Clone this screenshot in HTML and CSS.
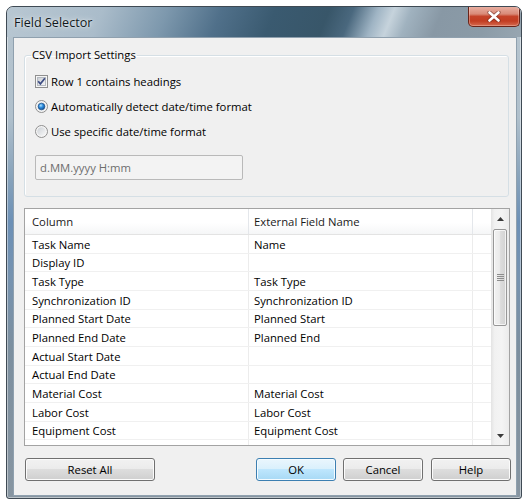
FILE: index.html
```html
<!DOCTYPE html>
<html lang="en">
<head>
<meta charset="utf-8">
<title>Field Selector</title>
<link rel="stylesheet" href="styles.css">
</head>
<body>
<div class="window">
  <div class="titlebar">
    <span class="title">Field Selector</span>
    <button class="close" aria-label="Close">
      <svg width="14" height="11" viewBox="0 0 14 11">
        <path d="M2.5 1.5 11.5 9.5 M11.5 1.5 2.5 9.5" stroke="#5a2118" stroke-width="4.2" stroke-linecap="round" opacity=".55"/>
        <path d="M2.5 1.5 11.5 9.5 M11.5 1.5 2.5 9.5" stroke="#ffffff" stroke-width="2.6" stroke-linecap="round"/>
      </svg>
    </button>
  </div>

  <div class="client">
    <fieldset class="group">
      <legend>CSV Import Settings</legend>
      <div class="options">
        <label class="opt">
          <svg class="mark" width="13" height="13" viewBox="0 0 13 13">
            <defs>
              <linearGradient id="cbfill" x1="0" y1="0" x2="1" y2="1">
                <stop offset="0" stop-color="#c9cdd3"/>
                <stop offset="1" stop-color="#f7f7f7"/>
              </linearGradient>
            </defs>
            <rect x=".5" y=".5" width="12" height="12" fill="#f6f6f6" stroke="#8f8f8f"/>
            <rect x="2.5" y="2.5" width="8" height="8" fill="url(#cbfill)" stroke="#b5bac1"/>
            <path d="M3.2 6.3 5.4 8.9 9.9 3.3" fill="none" stroke="#3e4d84" stroke-width="1.7"/>
          </svg>
          <span>Row 1 contains headings</span>
        </label>
        <label class="opt">
          <svg class="mark" width="13" height="13" viewBox="0 0 13 13">
            <defs>
              <radialGradient id="rdot" cx=".4" cy=".35" r=".7">
                <stop offset="0" stop-color="#b2e2fc"/>
                <stop offset=".45" stop-color="#2c8de0"/>
                <stop offset="1" stop-color="#114a8b"/>
              </radialGradient>
            </defs>
            <circle cx="6.5" cy="6.5" r="6" fill="#f5f5f5" stroke="#8f8f8f"/>
            <circle cx="6.5" cy="6.5" r="4.3" fill="#dde1e6"/>
            <circle cx="6.5" cy="6.5" r="3.3" fill="url(#rdot)" stroke="#1b4f86" stroke-width=".7"/>
          </svg>
          <span>Automatically detect date/time format</span>
        </label>
        <label class="opt">
          <svg class="mark" width="13" height="13" viewBox="0 0 13 13">
            <defs>
              <linearGradient id="rfill" x1="0" y1="0" x2="1" y2="1">
                <stop offset="0" stop-color="#cdd1d6"/>
                <stop offset="1" stop-color="#f8f8f8"/>
              </linearGradient>
            </defs>
            <circle cx="6.5" cy="6.5" r="6" fill="#f5f5f5" stroke="#8f8f8f"/>
            <circle cx="6.5" cy="6.5" r="4.3" fill="url(#rfill)"/>
          </svg>
          <span>Use specific date/time format</span>
        </label>
      </div>
      <div class="textbox">d.MM.yyyy H:mm</div>
    </fieldset>

    <div class="grid">
      <div class="table">
        <div class="row head"><div class="cell">Column</div><div class="cell">External Field Name</div><div class="cell"></div></div>
        <div class="row"><div class="cell">Task Name</div><div class="cell">Name</div><div class="cell"></div></div>
        <div class="row"><div class="cell">Display ID</div><div class="cell"></div><div class="cell"></div></div>
        <div class="row"><div class="cell">Task Type</div><div class="cell">Task Type</div><div class="cell"></div></div>
        <div class="row"><div class="cell">Synchronization ID</div><div class="cell">Synchronization ID</div><div class="cell"></div></div>
        <div class="row"><div class="cell">Planned Start Date</div><div class="cell">Planned Start</div><div class="cell"></div></div>
        <div class="row"><div class="cell">Planned End Date</div><div class="cell">Planned End</div><div class="cell"></div></div>
        <div class="row"><div class="cell">Actual Start Date</div><div class="cell"></div><div class="cell"></div></div>
        <div class="row"><div class="cell">Actual End Date</div><div class="cell"></div><div class="cell"></div></div>
        <div class="row"><div class="cell">Material Cost</div><div class="cell">Material Cost</div><div class="cell"></div></div>
        <div class="row"><div class="cell">Labor Cost</div><div class="cell">Labor Cost</div><div class="cell"></div></div>
        <div class="row"><div class="cell">Equipment Cost</div><div class="cell">Equipment Cost</div><div class="cell"></div></div>
        <div class="row"><div class="cell"></div><div class="cell"></div><div class="cell"></div></div>
      </div>
      <div class="vscroll">
        <div class="arrow">
          <svg width="7" height="4" viewBox="0 0 7 4"><path d="M3.5 0 7 4H0z" fill="#3a3a3a"/></svg>
        </div>
        <div class="thumb">
          <svg width="7" height="7" viewBox="0 0 7 7">
            <path d="M0 .5h7M0 2.5h7M0 4.5h7M0 6.5h7" stroke="#8d8d8d" stroke-width="1"/>
          </svg>
        </div>
        <div class="track"></div>
        <div class="arrow">
          <svg width="7" height="4" viewBox="0 0 7 4"><path d="M0 0h7L3.5 4z" fill="#3a3a3a"/></svg>
        </div>
      </div>
    </div>

    <div class="buttons">
      <button class="btn reset">Reset All</button>
      <button class="btn default ok">OK</button>
      <button class="btn">Cancel</button>
      <button class="btn help">Help</button>
    </div>
  </div>
</div>
</body>
</html>
```

FILE: styles.css
```css
* {
  box-sizing: border-box;
}

html,
body {
  margin: 0;
  background: #ffffff;
}

body {
  padding: 6px 0 0 6px;
  font-family: "Open Sans", "Noto Sans", "DejaVu Sans", sans-serif;
  font-size: 11.3px;
  color: #000000;
}

/* ---------- window frame ---------- */
.window {
  width: 516px;
  height: 493px;
  display: flex;
  flex-direction: column;
  border: 1px solid #3f4a54;
  border-radius: 7px 7px 3px 3px;
  background: linear-gradient(180deg,
      #b7c5cf 0px, #b0c0cc 110px, #88a3bb 170px,
      #6c90b6 215px, #7693b0 270px, #7c8f9f 340px, #8795a1 100%);
  box-shadow: inset 0 0 0 1px rgba(255, 255, 255, 0.45);
  overflow: hidden;
}

.titlebar {
  height: 30px;
  flex: none;
  display: flex;
  justify-content: space-between;
  align-items: flex-start;
  padding-left: 7px;
  background: linear-gradient(112deg,
      #b8c7d2 0px, #aabcca 90px, #7d98ad 150px, #50708a 200px,
      #3a5a70 250px, #385669 300px, #4a687e 322px, #9fb4c4 345px,
      #c6d3dc 360px, #a0b2bf 376px, #8898a5 405px, #8b9ba7 450px,
      #a3b0ba 520px);
  border-radius: 6px 6px 0 0;
}

.title {
  line-height: 32px;
  font-size: 12.6px;
  color: #101820;
  text-shadow: 0 0 6px rgba(255, 255, 255, 0.85), 0 0 2px rgba(255, 255, 255, 0.7);
}

.close {
  width: 52px;
  height: 21px;
  margin: -1px 1px 0 0;
  padding: 0;
  display: flex;
  align-items: center;
  justify-content: center;
  border: 1px solid #6a2419;
  border-top: none;
  border-radius: 0 0 5px 5px;
  background: linear-gradient(180deg,
      #eab3a6 0%, #d98a78 40%, #c5432a 52%, #c23d22 75%, #d56a4f 100%);
  box-shadow: inset 0 0 0 1px rgba(255, 220, 210, 0.35);
}

/* ---------- client area ---------- */
.client {
  flex: 1;
  margin: 0 4px 2px 6px;
  padding: 0 6px 0 10px;
  display: flex;
  flex-direction: column;
  border: 1px solid #8fa0ae;
  background: #f0f0f0;
}

/* group box */
.group {
  margin: 9px 1px 0 0;
  padding: 0 6px 16px 6px;
  border: 1px solid #d5dfe5;
  border-radius: 3px;
  box-shadow: inset 1px 1px 0 #ffffff;
}

.group legend {
  padding: 0 1px;
  line-height: 16px;
}

.options {
  margin: 6px 0 0 4px;
  display: flex;
  flex-direction: column;
}

.opt {
  height: 25px;
  display: flex;
  align-items: center;
  gap: 3px;
}

.mark {
  flex: none;
}

.textbox {
  width: 208px;
  height: 25px;
  margin: 11px 0 0 4px;
  padding-left: 4px;
  display: flex;
  align-items: center;
  border: 1px solid #b9b9b9;
  border-radius: 2px;
  background: #f3f3f3;
  color: #6d6d6d;
}

/* ---------- mapping grid ---------- */
.grid {
  height: 238px;
  margin-top: 11px;
  display: flex;
  border: 1px solid #a3a3a3;
  background: #ffffff;
}

.table {
  flex: 1;
  overflow: hidden;
}

.row {
  height: 18.67px;
  display: grid;
  grid-template-columns: 224px 224px 18px;
  border-bottom: 1px solid #f0f0f0;
}

.row.head {
  height: 26px;
  border-bottom: 1px solid #e3e3e3;
  background: linear-gradient(180deg, #ffffff 0%, #ffffff 55%, #f5f6f7 100%);
}

.cell {
  display: flex;
  align-items: center;
  padding: 1px 0 0 5px;
  border-right: 1px solid #ececec;
  white-space: nowrap;
  overflow: hidden;
}

.cell:first-child {
  padding-left: 7px;
}

.row.head .cell {
  padding-top: 0;
  border-right-color: #e4e7eb;
  color: #1a1a1a;
}

.cell:last-child {
  border-right: none;
}

/* vertical scroll bar */
.vscroll {
  width: 18px;
  flex: none;
  display: flex;
  flex-direction: column;
  align-items: center;
  background: linear-gradient(90deg, #e3e3e3 0%, #f1f1f1 20%, #f4f4f4 60%, #ebebeb 100%);
}

.arrow {
  height: 19px;
  width: 100%;
  display: flex;
  align-items: center;
  justify-content: center;
  flex: none;
}

.thumb {
  width: 14px;
  height: 97px;
  margin-top: 1px;
  display: flex;
  align-items: center;
  justify-content: center;
  border: 1px solid #979797;
  border-radius: 2px;
  background: linear-gradient(90deg, #f2f2f2 0%, #ebebeb 45%, #dcdcdc 55%, #d3d3d3 100%);
  box-shadow: inset 0 0 0 1px rgba(255, 255, 255, 0.7);
}

.track {
  flex: 1;
}

/* ---------- command buttons ---------- */
.buttons {
  height: 23px;
  margin-top: 12px;
  display: flex;
  gap: 7px;
}

.btn {
  width: 80px;
  height: 23px;
  padding: 0;
  font: inherit;
  color: #000000;
  border: 1px solid #707070;
  border-radius: 3px;
  background: linear-gradient(180deg, #f2f2f2 0%, #ebebeb 50%, #dddddd 50%, #cfcfcf 100%);
  box-shadow: inset 0 0 0 1px #fbfbfb;
}

.btn.reset {
  width: 130px;
  margin-left: 1px;
}

.btn.ok {
  margin-left: auto;
}

.btn.help {
  margin-left: 1px;
  margin-right: -1px;
}

.btn.default {
  border-color: #3c7fb1;
  background: linear-gradient(180deg, #eaf6fd 0%, #d9f0fc 50%, #bee6fd 50%, #a7d9f5 100%);
  box-shadow: inset 0 0 0 1px #f4fbff;
}
```
